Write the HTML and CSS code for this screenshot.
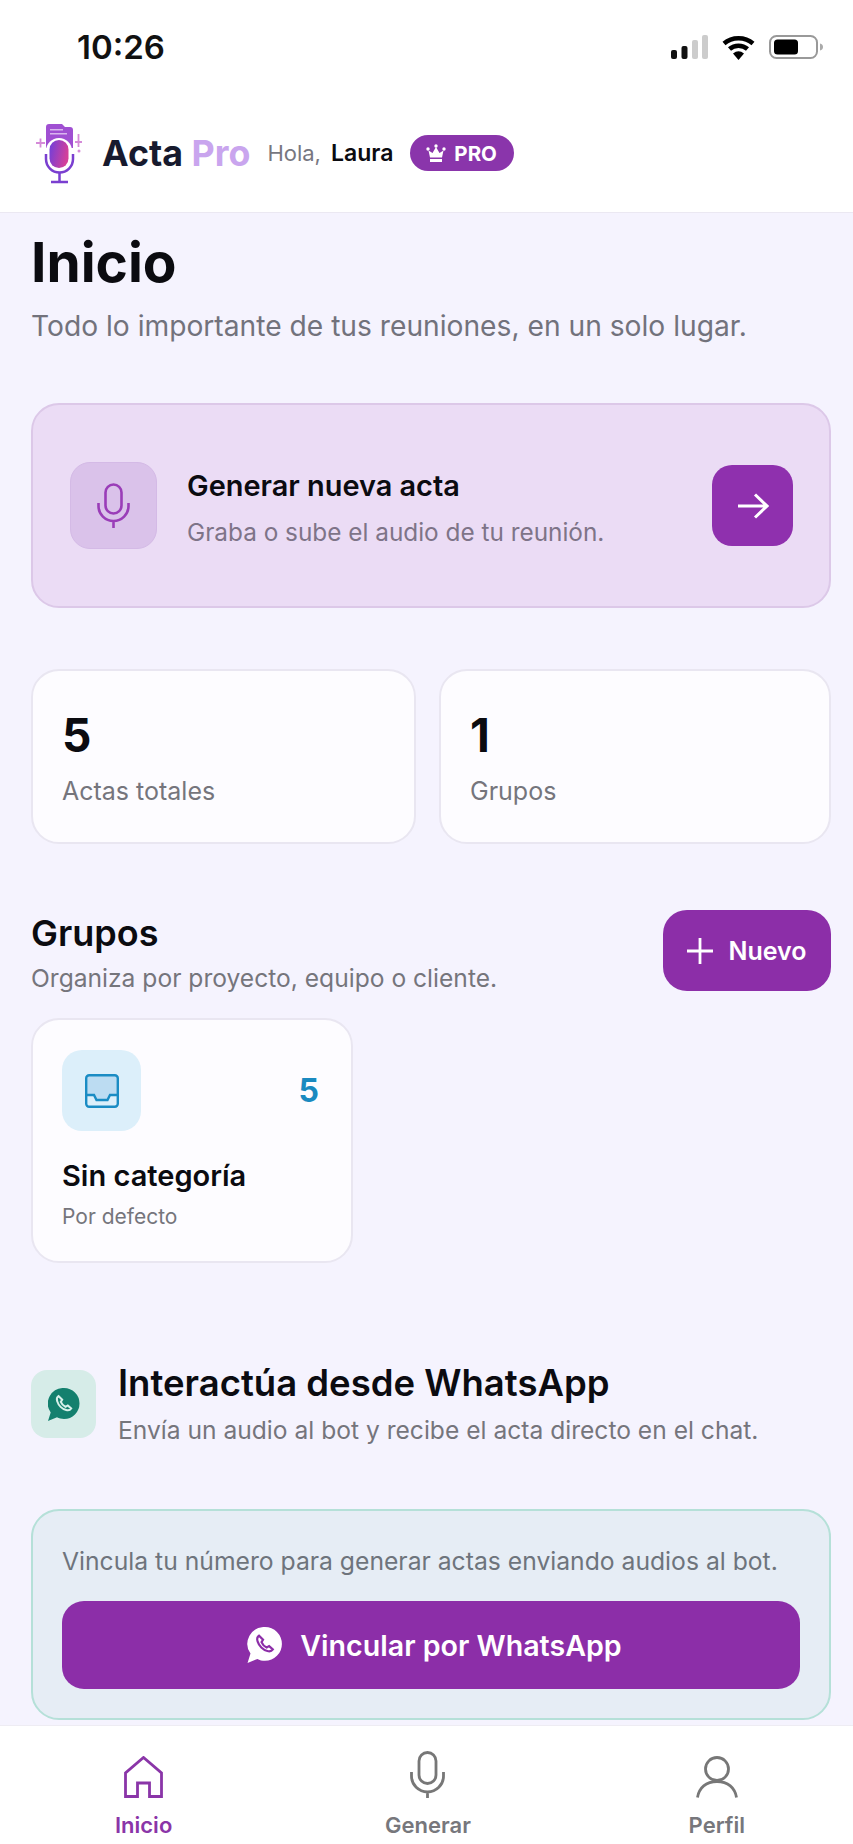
FILE: index.html
```html
<!DOCTYPE html>
<html lang="es">
<head>
<meta charset="utf-8">
<title>Acta Pro</title>
<link rel="stylesheet" href="styles.css">
</head>
<body>
<div class="app">
  <div class="status-bar">
    <span class="time">10:26</span>
    <div class="status-icons">
      <svg width="37" height="24" viewBox="0 0 37 24">
        <rect x="0" y="15" width="6" height="9" rx="2" fill="#111"/>
        <rect x="10.500" y="11" width="6" height="13" rx="2" fill="#111"/>
        <rect x="21" y="5" width="6" height="19" rx="2" fill="#ccc"/>
        <rect x="31" y="0" width="6" height="24" rx="2" fill="#ccc"/>
      </svg>
      <svg width="33" height="25" viewBox="0 0 33 25">
        <path d="M2 8.500C10 1.500 23 1.500 31 8.500" fill="none" stroke="#000" stroke-width="4.500"/>
        <path d="M7.500 14C12.500 9.500 20.500 9.500 25.500 14" fill="none" stroke="#000" stroke-width="4.500"/>
        <path d="M11 18.500Q16.500 14 22 18.500L16.500 25Z" fill="#000"/>
      </svg>
      <svg width="55" height="24" viewBox="0 0 55 24">
        <rect x="1" y="1" width="47" height="22" rx="6.500" fill="none" stroke="#999" stroke-width="2"/>
        <rect x="5" y="4.500" width="24" height="15" rx="3.500" fill="#000"/>
        <path d="M51 8.500c2 .5 3 1.800 3 3.500s-1 3-3 3.500z" fill="#aaa"/>
      </svg>
    </div>
  </div>

  <header class="top-bar">
    <svg class="logo" width="50" height="62" viewBox="0 0 50 62">
      <defs>
        <linearGradient id="micFill" x1="0" y1="0" x2="1" y2="0.300">
          <stop offset="0" stop-color="#6d3fdc"/>
          <stop offset="1" stop-color="#d4409a"/>
        </linearGradient>
      </defs>
      <path d="M11 5a3 3 0 0 1 3-3h13l3 3h5a3 3 0 0 1 3 3v18H11z" fill="#a04fd2"/>
      <rect x="15" y="7" width="13" height="1.500" fill="#d9b6ee"/>
      <rect x="15" y="11" width="17" height="1.500" fill="#d9b6ee"/>
      <rect x="11" y="16" width="26" height="33" rx="13" fill="#fff"/>
      <rect x="14.500" y="18" width="19" height="28" rx="9.500" fill="url(#micFill)"/>
      <path d="M11 32v5a13.500 13.500 0 0 0 27 0v-5" fill="none" stroke="#7a3fd0" stroke-width="2.500"/>
      <path d="M24.500 51v8M16 60h17" fill="none" stroke="#7a3fd0" stroke-width="2.500"/>
      <path d="M1 21h9M5.500 16.500v9" stroke="#d58ad8" stroke-width="1.800"/>
      <path d="M40 20h7M43.500 12v13" stroke="#d58ad8" stroke-width="1.800"/>
      <circle cx="44" cy="29" r="1.500" fill="#d58ad8"/>
    </svg>
    <div class="brand">Acta <span class="brand-pro">Pro</span></div>
    <span class="hello">Hola,</span>
    <span class="user">Laura</span>
    <span class="badge">
      <svg width="20" height="19" viewBox="0 0 20 19">
        <path d="M4 13.500 2.500 6.500l4 2.500L10 3l3.500 6 4-2.500L16 13.500zM4 15h12v3H4z" fill="#fff"/>
        <circle cx="10" cy="2" r="1.700" fill="#fff"/>
        <circle cx="2" cy="5" r="1.700" fill="#fff"/>
        <circle cx="18" cy="5" r="1.700" fill="#fff"/>
      </svg>
      PRO
    </span>
  </header>

  <main class="content">
    <h1 class="page-title">Inicio</h1>
    <p class="page-sub">Todo lo importante de tus reuniones, en un solo lugar.</p>

    <section class="hero">
      <div class="hero-icon">
        <svg width="33" height="45" viewBox="0 0 33 45" fill="none" stroke="#9a3db8" stroke-width="2.600">
          <rect x="8.500" y="1.500" width="16" height="29" rx="8"/>
          <path d="M1.500 20v3a15 15 0 0 0 30 0v-3M16.500 38v7"/>
        </svg>
      </div>
      <div class="hero-text">
        <div class="hero-title">Generar nueva acta</div>
        <div class="hero-sub">Graba o sube el audio de tu reunión.</div>
      </div>
      <div class="hero-go">
        <svg width="32" height="26" viewBox="0 0 32 26" fill="none" stroke="#fff" stroke-width="3">
          <path d="M1 13h29M18 1.500 30 13 18 24.500"/>
        </svg>
      </div>
    </section>

    <section class="stats">
      <div class="stat-card">
        <div class="stat-num">5</div>
        <div class="stat-label">Actas totales</div>
      </div>
      <div class="stat-card">
        <div class="stat-num">1</div>
        <div class="stat-label">Grupos</div>
      </div>
    </section>

    <section class="groups-head">
      <div>
        <h2 class="section-title">Grupos</h2>
        <p class="section-sub">Organiza por proyecto, equipo o cliente.</p>
      </div>
      <button class="btn-new">
        <svg width="26" height="26" viewBox="0 0 26 26" stroke="#fff" stroke-width="2.800">
          <path d="M13 0v26M0 13h26"/>
        </svg>
        Nuevo
      </button>
    </section>

    <div class="group-card">
      <div class="group-top">
        <div class="group-icon">
          <svg width="34" height="34" viewBox="0 0 34 34">
            <path d="M2 3a2 2 0 0 1 2-2h26a2 2 0 0 1 2 2v18h-7l-2 5H11l-2-5H2z" fill="#bcdcf2"/>
            <rect x="1.200" y="1.200" width="31.600" height="31.600" rx="3" fill="none" stroke="#1a8cc4" stroke-width="2.400"/>
            <path d="M2 21h7l2.500 5h11l2.500-5h7" fill="none" stroke="#1a8cc4" stroke-width="2.400"/>
          </svg>
        </div>
        <span class="group-count">5</span>
      </div>
      <div class="group-name">Sin categoría</div>
      <div class="group-note">Por defecto</div>
    </div>

    <section class="wa-head">
      <div class="wa-icon">
        <svg width="32" height="33" viewBox="0 0 32 33">
          <path d="M16 0a15.500 15.500 0 0 1 0 31c-2.500 0-5-.6-7-1.700L0 33l2.700-8.600A15.500 15.500 0 0 1 16 0z" fill="#14806e"/>
          <path d="M10.500 8c-1.500 1-2 3-1.300 5.200 1.200 4 5 7.800 9 8.800 2.200.6 4 0 5-1.500l-3.400-3-2.300 1.300c-2.200-1-3.800-2.700-4.700-4.900l1.400-2.200z" fill="none" stroke="#d8f0ea" stroke-width="2"/>
        </svg>
      </div>
      <div>
        <h2 class="wa-title">Interactúa desde WhatsApp</h2>
        <p class="wa-sub">Envía un audio al bot y recibe el acta directo en el chat.</p>
      </div>
    </section>

    <section class="wa-card">
      <p class="wa-card-text">Vincula tu número para generar actas enviando audios al bot.</p>
      <button class="btn-wa">
        <svg width="36" height="36" viewBox="0 0 32 33">
          <path d="M16 0a15.500 15.500 0 0 1 0 31c-2.500 0-5-.6-7-1.700L0 33l2.700-8.600A15.500 15.500 0 0 1 16 0z" fill="#fff"/>
          <path d="M10.500 8c-1.500 1-2 3-1.300 5.200 1.200 4 5 7.800 9 8.800 2.200.6 4 0 5-1.500l-3.400-3-2.300 1.300c-2.200-1-3.800-2.700-4.700-4.900l1.400-2.200z" fill="none" stroke="#8c2ea8" stroke-width="2"/>
        </svg>
        Vincular por WhatsApp
      </button>
    </section>
  </main>

  <nav class="tab-bar">
    <div class="tab tab-active">
      <svg width="39" height="42" viewBox="0 0 39 42" fill="none" stroke="#8a35a8" stroke-width="2.800">
        <path d="M1.500 40.500V17L19.500 1.500 37.500 17v23.500H25.500V27h-12v13.500z"/>
      </svg>
      <span>Inicio</span>
    </div>
    <div class="tab tab-mid">
      <svg width="35" height="47" viewBox="0 0 35 47" fill="none" stroke="#777" stroke-width="2.800">
        <rect x="9" y="1.500" width="17" height="31" rx="8.500"/>
        <path d="M1.500 21v4a16 16 0 0 0 32 0v-4M17.500 41v6"/>
      </svg>
      <span>Generar</span>
    </div>
    <div class="tab">
      <svg width="42" height="42" viewBox="0 0 42 42" fill="none" stroke="#777" stroke-width="2.800">
        <circle cx="21" cy="13" r="11.500"/>
        <path d="M1.500 41.500C3 32 10 25.500 21 25.500s18 6.500 19.500 16"/>
      </svg>
      <span>Perfil</span>
    </div>
  </nav>
</div>
</body>
</html>
```

FILE: styles.css
```css
* {
  box-sizing: border-box;
}

body {
  margin: 0;
  font-family: "Inter", "Liberation Sans", sans-serif;
  background-color: #f5f3fe;
  color: #0b0b10;
}

h1, h2, p {
  margin: 0;
}

button {
  border: none;
  font-family: inherit;
  color: #fff;
  background-color: #8c2ea8;
  display: flex;
  align-items: center;
  justify-content: center;
}

.app {
  display: flex;
  flex-direction: column;
  width: 853px;
  height: 1844px;
  overflow: hidden;
}

/* status bar */
.status-bar {
  display: flex;
  align-items: center;
  justify-content: space-between;
  height: 94px;
  padding: 0 29px 0 77px;
  background-color: #fff;
}

.time {
  font-size: 33px;
  font-weight: 600;
  color: #111;
}

.status-icons {
  display: flex;
  align-items: center;
  gap: 14px;
}

/* header */
.top-bar {
  display: flex;
  align-items: center;
  height: 119px;
  padding-left: 35px;
  background-color: #fff;
  border-bottom: 1px solid #ebe8f2;
}

.brand {
  margin-left: 17px;
  font-size: 35.800px;
  font-weight: 700;
  color: #171a2e;
}

.brand-pro {
  color: #c9a5ee;
}

.hello {
  margin-left: 17px;
  font-size: 22px;
  color: #77777f;
}

.user {
  margin-left: 10px;
  font-size: 23px;
  font-weight: 600;
}

.badge {
  display: flex;
  align-items: center;
  gap: 8px;
  height: 36px;
  margin-left: 17px;
  padding: 0 17px 0 16px;
  border-radius: 18px;
  background-color: #8a35ab;
  color: #fff;
  font-size: 20.500px;
  font-weight: 700;
}

/* main */
.content {
  flex: 1;
  overflow: hidden;
  padding: 19px 22px 0 31px;
}

.page-title {
  font-size: 55px;
  line-height: 60px;
  font-weight: 700;
}

.page-sub {
  margin-top: 16px;
  font-size: 28.200px;
  line-height: 36px;
  color: #72727c;
}

.hero {
  display: flex;
  align-items: center;
  height: 205px;
  margin-top: 59px;
  padding: 0 36px 0 37px;
  border: 2px solid #dcc8e8;
  border-radius: 28px;
  background-color: #ebdcf5;
}

.hero-icon {
  display: flex;
  align-items: center;
  justify-content: center;
  width: 87px;
  height: 87px;
  flex-shrink: 0;
  border-radius: 20px;
  background-color: #dac2ea;
  border: 1px solid #d4bae6;
}

.hero-text {
  flex: 1;
  margin: 6px 0 0 30px;
}

.hero-title {
  font-size: 28.900px;
  line-height: 36px;
  font-weight: 600;
}

.hero-sub {
  margin-top: 11px;
  font-size: 24.350px;
  line-height: 34px;
  color: #7e7488;
}

.hero-go {
  display: flex;
  align-items: center;
  justify-content: center;
  width: 81px;
  height: 81px;
  border-radius: 20px;
  background-color: #8f30ae;
}

.stats {
  display: grid;
  grid-template-columns: 385px 1fr;
  gap: 23px;
  margin-top: 61px;
}

.stat-card {
  height: 175px;
  padding: 36px 29px 0;
  border: 2px solid #e9e6f1;
  border-radius: 28px;
  background-color: #fdfcff;
}

.stat-num {
  font-size: 46px;
  line-height: 56px;
  font-weight: 700;
}

.stat-label {
  margin-top: 11px;
  font-size: 25px;
  line-height: 34px;
  color: #75757c;
}

.groups-head {
  display: flex;
  justify-content: space-between;
  align-items: flex-start;
  margin-top: 66px;
}

.section-title {
  font-size: 36px;
  line-height: 46px;
  font-weight: 600;
}

.section-sub {
  margin-top: 5px;
  font-size: 24.600px;
  line-height: 34px;
  color: #75757c;
}

.btn-new {
  gap: 15px;
  width: 168px;
  height: 81px;
  border-radius: 24px;
  font-size: 25px;
  font-weight: 600;
}

.group-card {
  width: 322px;
  height: 245px;
  margin-top: 23px;
  padding: 30px 32px 0 29px;
  border: 2px solid #e9e6f1;
  border-radius: 28px;
  background-color: #fdfcff;
}

.group-top {
  display: flex;
  justify-content: space-between;
  align-items: center;
}

.group-icon {
  display: flex;
  align-items: center;
  justify-content: center;
  width: 79px;
  height: 81px;
  border-radius: 20px;
  background-color: #dceffa;
}

.group-count {
  font-size: 32px;
  font-weight: 700;
  color: #1a8ac0;
}

.group-name {
  margin-top: 27px;
  font-size: 29px;
  line-height: 36px;
  font-weight: 600;
}

.group-note {
  margin-top: 8px;
  font-size: 21px;
  line-height: 30px;
  color: #75757c;
}

.wa-head {
  display: flex;
  align-items: center;
  gap: 22px;
  margin-top: 98px;
}

.wa-icon {
  display: flex;
  align-items: center;
  justify-content: center;
  width: 65px;
  height: 68px;
  border-radius: 16px;
  background-color: #d6ece8;
}

.wa-title {
  font-size: 36.500px;
  line-height: 44px;
  font-weight: 600;
}

.wa-sub {
  margin-top: 8px;
  font-size: 24.600px;
  line-height: 34px;
  color: #75757c;
}

.wa-card {
  height: 211px;
  margin-top: 62px;
  padding: 33px 29px 0;
  border: 2px solid #b5e0d8;
  border-radius: 28px;
  background-color: #e6edf5;
}

.wa-card-text {
  font-size: 24.700px;
  line-height: 34px;
  color: #6e747c;
}

.btn-wa {
  gap: 17px;
  width: 100%;
  height: 88px;
  margin-top: 23px;
  padding-left: 13px;
  border-radius: 22px;
  font-size: 28.600px;
  font-weight: 600;
}

/* bottom tabs */
.tab-bar {
  display: flex;
  justify-content: space-between;
  height: 119px;
  padding: 0 108px 0 115px;
  background-color: #fff;
  border-top: 1px solid #eeecf3;
}

.tab {
  display: flex;
  flex-direction: column;
  align-items: center;
  justify-content: flex-end;
  height: 112px;
  gap: 14px;
  font-size: 22px;
  font-weight: 600;
  color: #77777c;
}

.tab-mid {
  margin-right: 5px;
}

.tab-active {
  color: #8a35a8;
}
```
